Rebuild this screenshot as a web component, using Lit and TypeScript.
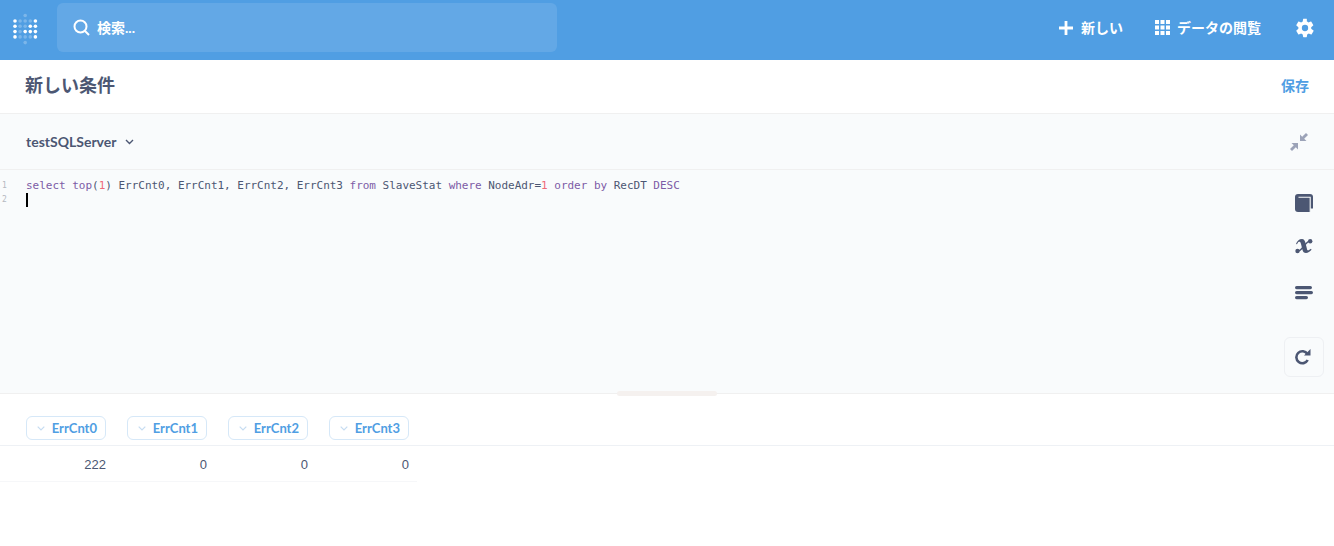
import { LitElement, html, css, svg } from "lit";
import { customElement } from "lit/decorators.js";

const logoDots = () => {
  const white = new Set(["0,0","0,1","0,2","0,3","4,0","4,1","4,2","4,3","3,1","3,2","2,2"]);
  const out = [];
  for (let r = 0; r < 4; r++) for (let c = 0; c < 5; c++) {
    out.push(svg`<circle cx=${2 + c * 5.1} cy=${8 + r * 5.3} r="1.800" fill="#fff" opacity=${white.has(`${c},${r}`) ? 1 : 0.25}></circle>`);
  }
  out.push(svg`<circle cx="12.200" cy="2.500" r="1.800" fill="#fff" opacity="0.25"></circle>`);
  out.push(svg`<circle cx="12.200" cy="29.600" r="1.800" fill="#fff" opacity="0.25"></circle>`);
  return out;
};

const cols = ["ErrCnt0", "ErrCnt1", "ErrCnt2", "ErrCnt3"];
const vals = ["222", "0", "0", "0"];

@customElement("app-root")
export class AppRoot extends LitElement {
  static styles = css`
    :host { display: block; width: 1334px; height: 546px; overflow: hidden; background: #fff; font-family: Lato, "Noto Sans CJK JP", "Noto Sans", sans-serif; color: #4c5773; }
    svg { display: block; flex: none; }
    .nav { height: 60px; background: #509ee3; display: flex; align-items: center; color: #fff; font-weight: 700; font-size: 14px; }
    .logo { margin-left: 13px; width: 44px; margin-top: -2px; }
    .search { width: 500px; height: 49px; margin-top: -5px; border-radius: 6px; background: rgba(255,255,255,.11); display: flex; align-items: center; gap: 7px; padding-left: 16px; box-sizing: border-box; }
    .search span { margin-top: -2px; }
    .spacer { flex: 1; }
    .nav-item { display: flex; align-items: center; margin-top: -7px; white-space: nowrap; }
    .nav-item svg { margin-top: 2px; }
    .new { gap: 8px; margin-right: 32px; }
    .browse { gap: 7px; margin-right: 34px; }
    .gear { margin-top: -4px; margin-right: 19px; }
    .head { height: 54px; box-sizing: border-box; padding: 0 25px; border-bottom: 1px solid #f0f0f0; display: flex; align-items: center; justify-content: space-between; }
    .title { font-size: 18px; font-weight: 700; margin-top: -5px; }
    .save { font-size: 14px; font-weight: 700; color: #509ee3; margin-top: -4px; }
    .db { height: 56px; box-sizing: border-box; background: #f9fbfc; border-bottom: 1px solid #f0f0f0; display: flex; align-items: center; padding: 0 26px; font-size: 14px; font-weight: 700; gap: 8px; }
    .chev { margin-left: 1px; margin-top: 1px; }
    .shrink { margin-left: auto; margin-right: -1px; }
    .editor { height: 223px; background: #f9fbfc; display: flex; position: relative; border-bottom: 1px solid #f0f0f0; }
    .gutter { width: 26px; padding: 9px 0 0 2px; box-sizing: border-box; font: 8px/14px "DejaVu Sans Mono", monospace; color: #b4b8c0; flex: none; }
    .gutter div { height: 14px; }
    .code { flex: 1; padding-top: 9px; font: 11px/14px "DejaVu Sans Mono", monospace; letter-spacing: -0.02px; color: #4c5773; }
    .line { height: 14px; white-space: pre; }
    .k { color: #7d5ba6; }
    .n { color: #ef6a7a; }
    .cursor { display: block; width: 2px; height: 14px; background: #000; }
    .side { width: 40px; margin-right: 10px; flex: none; display: flex; flex-direction: column; align-items: center; padding-top: 24px; }
    .side .gap1 { margin-top: 26px; }
    .side .gap2 { margin-top: 32px; }
    .run { margin-top: auto; margin-bottom: 16px; width: 40px; height: 40px; box-sizing: border-box; border: 1px solid #eef0f3; border-radius: 6px; display: flex; align-items: center; justify-content: center; padding-right: 2px; }
    .handle { position: absolute; left: 617px; bottom: -3px; width: 100px; height: 5px; border-radius: 3px; background: #f5f1ef; }
    .table { padding-top: 22px; }
    .tr { display: flex; width: 417px; }
    .hr { width: 100%; padding-bottom: 5px; border-bottom: 1px solid #eef1f5; display: flex; padding-left: 26px; gap: 21px; box-sizing: border-box; }
    .pill { width: 80px; height: 24px; box-sizing: border-box; border: 1px solid #d6e8f8; border-radius: 6px; color: #509ee3; font-size: 13px; font-weight: 700; display: flex; align-items: center; justify-content: flex-end; padding-right: 8px; gap: 7px; white-space: nowrap; }
    .cells { height: 36px; box-sizing: border-box; border-bottom: 1px solid #f6f7f9; align-items: center; padding-left: 26px; gap: 21px; }
    .cell { width: 80px; text-align: right; font: 13px "Liberation Sans", Arial, sans-serif; margin-top: 2px; }
  `;

  render() {
    return html`
      <div class="nav">
        <div class="logo"><svg width="25" height="33" viewBox="0 0 25 33">${logoDots()}</svg></div>
        <div class="search">
          <svg width="17" height="17" viewBox="0 0 17 17" fill="none" stroke="#fff" stroke-width="2"><circle cx="7.500" cy="7.500" r="6"></circle><path d="M12 12l4 4"></path></svg>
          <span>検索...</span>
        </div>
        <div class="spacer"></div>
        <div class="nav-item new">
          <svg width="14" height="14" viewBox="0 0 14 14" fill="#fff"><path d="M5.600 0h2.800v5.600H14v2.800H8.400V14H5.600V8.400H0V5.600h5.600z"></path></svg>
          <span>新しい</span>
        </div>
        <div class="nav-item browse">
          <svg width="15" height="15" viewBox="0 0 15 15" fill="#fff"><rect x="0" y="0" width="4" height="4"></rect><rect x="5.500" y="0" width="4" height="4"></rect><rect x="11" y="0" width="4" height="4"></rect><rect x="0" y="5.500" width="4" height="4"></rect><rect x="5.500" y="5.500" width="4" height="4"></rect><rect x="11" y="5.500" width="4" height="4"></rect><rect x="0" y="11" width="4" height="4"></rect><rect x="5.500" y="11" width="4" height="4"></rect><rect x="11" y="11" width="4" height="4"></rect></svg>
          <span>データの閲覧</span>
        </div>
        <svg class="gear" width="20" height="20" viewBox="0 0 24 24" fill="#fff"><path fill-rule="evenodd" d="M19.400 13c.1-.3.1-.7.1-1s0-.7-.1-1l2.400-1.900c.2-.2.3-.5.1-.7l-2.300-3.900c-.1-.3-.4-.3-.7-.3l-2.800 1.100c-.6-.4-1.200-.8-1.900-1L14.200 1.400c0-.3-.3-.4-.5-.4H10.300c-.3 0-.5.100-.6.400L9.300 4.300c-.7.300-1.300.6-1.900 1L4.600 4.200c-.3-.1-.5 0-.7.300L1.600 8.400c-.2.200-.1.500.1.700L4.100 11c0 .3-.1.700-.1 1s0 .7.100 1l-2.400 1.900c-.2.200-.3.500-.1.700l2.300 3.900c.1.300.4.300.7.300l2.800-1.100c.6.400 1.200.8 1.900 1l.4 2.900c.1.300.3.400.6.400h3.400c.2 0 .5-.1.500-.4l.4-2.900c.7-.3 1.300-.6 1.900-1l2.800 1.100c.3.100.6 0 .7-.3l2.300-3.900c.2-.2.100-.5-.1-.7zM12 15.800a3.800 3.800 0 1 1 0-7.600 3.800 3.800 0 0 1 0 7.600z"></path></svg>
      </div>

      <div class="head">
        <div class="title">新しい条件</div>
        <div class="save">保存</div>
      </div>

      <div class="db">
        <span>testSQLServer</span>
        <svg class="chev" width="9" height="6" viewBox="0 0 9 6" fill="none" stroke="#4c5773" stroke-width="1.400"><path d="M1 1l3.500 3.500L8 1"></path></svg>
        <svg class="shrink" width="20" height="20" viewBox="0 0 20 20" fill="#9ca3b8"><path d="M11 9V2.500l2.200 2.200L17 1l2 2-3.800 3.800L17.500 9zM9 11v6.500l-2.200-2.200L3 19l-2-2 3.800-3.800L2.500 11z"></path></svg>
      </div>

      <div class="editor">
        <div class="gutter"><div>1</div><div>2</div></div>
        <div class="code">
          <div class="line"><span class="k">select</span> <span class="k">top</span>(<span class="n">1</span>) ErrCnt0, ErrCnt1, ErrCnt2, ErrCnt3 <span class="k">from</span> SlaveStat <span class="k">where</span> NodeAdr=<span class="n">1</span> <span class="k">order</span> <span class="k">by</span> RecDT <span class="k">DESC</span></div>
          <div class="line"><span class="cursor"></span></div>
        </div>
        <div class="side">
          <svg width="18" height="18" viewBox="0 0 18 18"><rect width="18" height="18" rx="3" fill="#4c5773"></rect><path d="M15.300 14.500H18V18H15.300z" fill="#f9fbfc"></path><path d="M3.500 3.200H15.200V18" fill="none" stroke="#f9fbfc" stroke-width="1.100"></path></svg>
          <svg class="gap1" width="18" height="16" viewBox="0 0 18 16" fill="#4c5773"><path d="M1 6C2 3 4 1 7 1 9 1 10 3 10.500 5L12 11C12.300 12.500 13 12.800 14 12L16 10.800 16.500 11.800C15 13.800 13 15 11 15 9 15 8 14 7.500 12L6 6C5.500 4 5 3.500 4 3.700 3 4 2.500 5 2 6.200Z"></path><path d="M1.500 13.500C5 13.500 7 10.500 9 8 11 5.500 13 3 15.500 2.800" fill="none" stroke="#4c5773" stroke-width="1.500"></path><circle cx="2.500" cy="13" r="2.200"></circle><circle cx="15.200" cy="3.200" r="2.200"></circle></svg>
          <svg class="gap2" width="18" height="14" viewBox="0 0 18 14" fill="#4c5773"><rect x="0" y="0" width="17" height="3.200" rx="1.600"></rect><rect x="0" y="5" width="18" height="3.200" rx="1.600"></rect><rect x="0" y="10" width="13" height="3.200" rx="1.600"></rect></svg>
          <div class="run">
            <svg width="16" height="16" viewBox="0 0 16 16" fill="none"><path d="M12.700 11a6 6 0 1 1-.3-6" stroke="#4c5773" stroke-width="2.600"></path><path d="M9 6.500h6.500V0z" fill="#4c5773"></path></svg>
          </div>
        </div>
        <div class="handle"></div>
      </div>

      <div class="table">
        <div class="hr">
          ${cols.map((c) => html`<div class="pill">
            <svg width="8" height="5" viewBox="0 0 8 5" fill="none" stroke="#c6dcf1" stroke-width="1.200"><path d="M.7.7l3.300 3.300L7.300.7"></path></svg>
            <span>${c}</span>
          </div>`)}
        </div>
        <div class="tr cells">
          ${vals.map((v) => html`<div class="cell">${v}</div>`)}
        </div>
      </div>
    `;
  }
}
